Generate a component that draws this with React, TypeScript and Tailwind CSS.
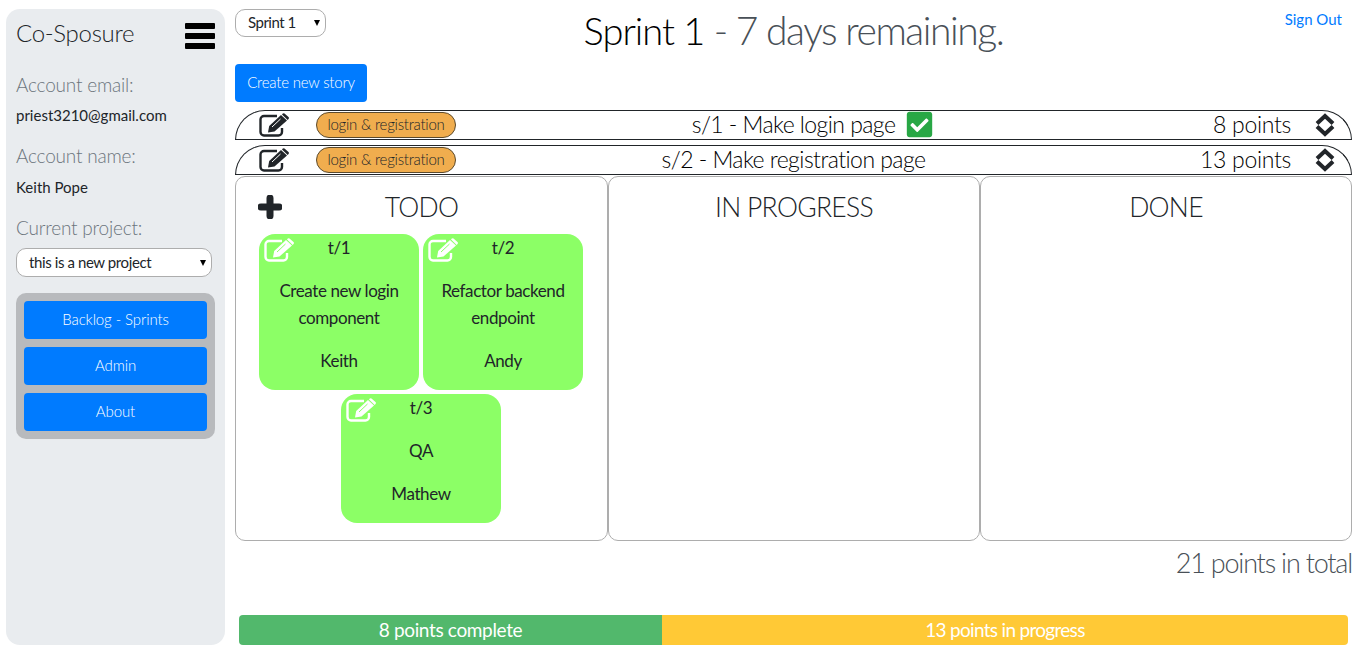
import { FaCheckSquare } from "react-icons/fa";

const stories = [
  { id: "s/1", title: "Make login page", points: 8, done: true },
  { id: "s/2", title: "Make registration page", points: 13, done: false },
];

const tasks = [
  { id: "t/1", lines: ["Create new login", "component"], owner: "Keith" },
  { id: "t/2", lines: ["Refactor backend", "endpoint"], owner: "Andy" },
  { id: "t/3", lines: ["QA"], owner: "Mathew" },
];

function Arrow() {
  return (
    <span className="absolute right-[5px] top-1/2 -translate-y-1/2 w-0 h-0 border-x-[3.5px] border-x-transparent border-t-[6px] border-t-black" />
  );
}

// square with a filled pencil over its top right corner
function EditIcon({ color, slit, className }: { color: string; slit: string; className?: string }) {
  return (
    <svg viewBox="0 0 30 24" width={30} height={24} className={className}>
      <path
        d="M23 15v4a3.5 3.5 0 0 1-3.500 3.500H5A3.5 3.5 0 0 1 1.500 19V6.500A3.5 3.5 0 0 1 5 3h13"
        fill="none"
        stroke={color}
        strokeWidth={2.4}
      />
      <path d="M9 19.500l1.200-6.500L22 2l6 5.500L15.500 18.500z" fill={color} />
      <path d="M23.500 .8a1.500 1.500 0 0 1 2-.3l4 3.500a1.500 1.500 0 0 1 0 2l-.8 1L23 1.500z" fill={color} />
      <path d="M13 14l8.500-8" stroke={slit} strokeWidth={1} />
    </svg>
  );
}

function TaskCard({ id, lines, owner }: { id: string; lines: string[]; owner: string }) {
  return (
    <div className="relative w-40 rounded-2xl bg-[#8cff66] pb-[16px] text-center text-[17px] leading-[27px] tracking-[-0.4px] text-[#212529]">
      <EditIcon color="#ffffff" slit="#8cff66" className="absolute left-[5px] top-[4px]" />
      <div>{id}</div>
      <div className="mt-[16px]">
        {lines.map((line) => (
          <div key={line}>{line}</div>
        ))}
      </div>
      <div className="mt-[16px]">{owner}</div>
    </div>
  );
}

function Column({ title, children }: { title: string; children?: React.ReactNode }) {
  return (
    <div className="relative rounded-[10px] border border-[#adadad] pt-[12px]">
      <h2 className="text-center text-[26.500px] leading-[36px] font-light tracking-[-0.7px] text-[#212529]">{title}</h2>
      {children}
    </div>
  );
}

export default function App() {
  return (
    <div className="flex h-[652px] w-[1357px] overflow-hidden bg-white font-['Lato',sans-serif] text-[#212529]">
      {/* sidebar */}
      <aside className="mt-[9px] mb-[7px] ml-[6px] flex w-[219px] flex-none flex-col rounded-[14px] bg-[#e9ecef] px-[10px]">
        <div className="mt-[7px] flex items-center justify-between">
          <span className="text-[24px] leading-[34px] font-light tracking-[-0.3px]">Co-Sposure</span>
          <div className="mt-[5px] flex w-[30px] flex-col gap-1">
            <div className="h-[6px] rounded-[1px] bg-black" />
            <div className="h-[6px] rounded-[1px] bg-black" />
            <div className="h-[6px] rounded-[1px] bg-black" />
          </div>
        </div>
        <div className="mt-[21px] text-[19px] leading-[27px] font-light tracking-[-0.2px] text-[#6c757d]">Account email:</div>
        <div className="mt-[5px] text-[15px] leading-[24px]">priest3210@gmail.com</div>
        <div className="mt-[15px] text-[19px] leading-[27px] font-light tracking-[-0.2px] text-[#6c757d]">Account name:</div>
        <div className="mt-[6px] text-[15px] leading-[24px]">Keith Pope</div>
        <div className="mt-[15px] text-[19px] leading-[27px] font-light tracking-[-0.2px] text-[#6c757d]">Current project:</div>
        <div className="relative mt-[7px] h-[29px] w-[196px] rounded-[10px] border border-[#adadad] bg-white pl-[12px] text-[15px] leading-[27px] tracking-[-0.4px]">
          this is a new project
          <Arrow />
        </div>
        <nav className="mt-[16px] flex w-[199px] flex-col gap-2 rounded-[10px] bg-[#b8babd] p-2">
          {["Backlog - Sprints", "Admin", "About"].map((label) => (
            <div key={label} className="h-[38px] rounded-[4px] bg-[#007bff] text-center text-[15px] leading-[36px] font-light tracking-[-0.1px] text-white">
              {label}
            </div>
          ))}
        </nav>
      </aside>

      {/* main */}
      <main className="ml-[10px] flex w-[1117px] flex-none flex-col">
        <header className="mt-[9px] grid h-[46px] grid-cols-[1fr_auto_1fr]">
          <div>
            <div className="relative h-[28px] w-[91px] rounded-[10px] border border-[#adadad] pl-[12px] text-[15px] leading-[25px] tracking-[-0.5px]">
              Sprint 1
              <Arrow />
            </div>
          </div>
          <h1 className="-mt-[2px] text-[38px] leading-[46px] font-light tracking-[-1px] text-black">
            Sprint 1 <span className="text-[39px] tracking-[-1.450px] text-[#495057]">- 7 days remaining.</span>
          </h1>
          <a className="pr-[10px] text-right text-[15px] leading-[20px] text-[#007bff]">Sign Out</a>
        </header>

        <button className="mt-[9px] h-[38px] w-[132px] rounded-[4px] bg-[#007bff] pb-[2px] text-center text-[15px] font-light tracking-[-0.2px] text-white">
          Create new story
        </button>

        <div className="mt-[8px] flex flex-col gap-[5px]">
          {stories.map((s) => (
            <div
              key={s.id}
              className="relative flex h-[30px] items-center rounded-t-[30px] border border-[#212529] pl-[23px] pr-[16px]"
            >
              <EditIcon color="#212529" slit="#ffffff" />
              <span className="ml-[27px] h-[26px] w-[140px] rounded-full border border-[#5c4a2c] bg-[#f0ad4e] text-center text-[15px] leading-[23px] font-light tracking-[-0.25px]">
                login &amp; registration
              </span>
              <div className="absolute inset-x-0 top-0 flex h-full items-center justify-center text-[23px] font-light tracking-[-0.55px] text-black">
                <span className="relative pb-[1px]">
                  {s.id} - {s.title}
                  {s.done && <FaCheckSquare className="absolute left-full top-[3px] ml-[10px] text-[#28a745]" size={29} />}
                </span>
              </div>
              <span className="ml-auto pb-[1px] text-[23px] font-light tracking-[-0.3px] text-black">{s.points} points</span>
              <svg viewBox="0 0 20 24" width={20} height={24} className="ml-[24px] text-[#212529]">
                <path d="M2 10.500 10 3l8 7.500M2 13.500 10 21l8-7.500" fill="none" stroke="currentColor" strokeWidth={4} />
              </svg>
            </div>
          ))}
        </div>

        <div className="mt-px grid h-[365px] grid-cols-[373px_372px_372px]">
          <Column title="TODO">
            <svg viewBox="0 0 24 24" width={24} height={24} className="absolute left-[22px] top-[18px] text-[#212529]">
              <path d="M12 3v18M3 12h18" fill="none" stroke="currentColor" strokeWidth={7} strokeLinecap="round" />
            </svg>
            <div className="mt-[9px] flex flex-wrap justify-center gap-x-1 gap-y-1 pr-[1px]">
              {tasks.map((t) => (
                <TaskCard key={t.id} {...t} />
              ))}
            </div>
          </Column>
          <Column title="IN PROGRESS" />
          <Column title="DONE" />
        </div>

        <div className="mt-[5px] text-right text-[27px] leading-[34px] font-light tracking-[-1.2px] text-[#495057]">21 points in total</div>

        <div className="mx-[4px] mt-[35px] flex h-[30px] overflow-hidden rounded-[4px] text-center text-[19px] leading-[30px] text-white">
          <div className="w-[423px] flex-none bg-[#52b86c] tracking-[-0.35px]">8 points complete</div>
          <div className="flex-1 bg-[#ffc936] tracking-[-0.7px]">13 points in progress</div>
        </div>
      </main>
    </div>
  );
}
